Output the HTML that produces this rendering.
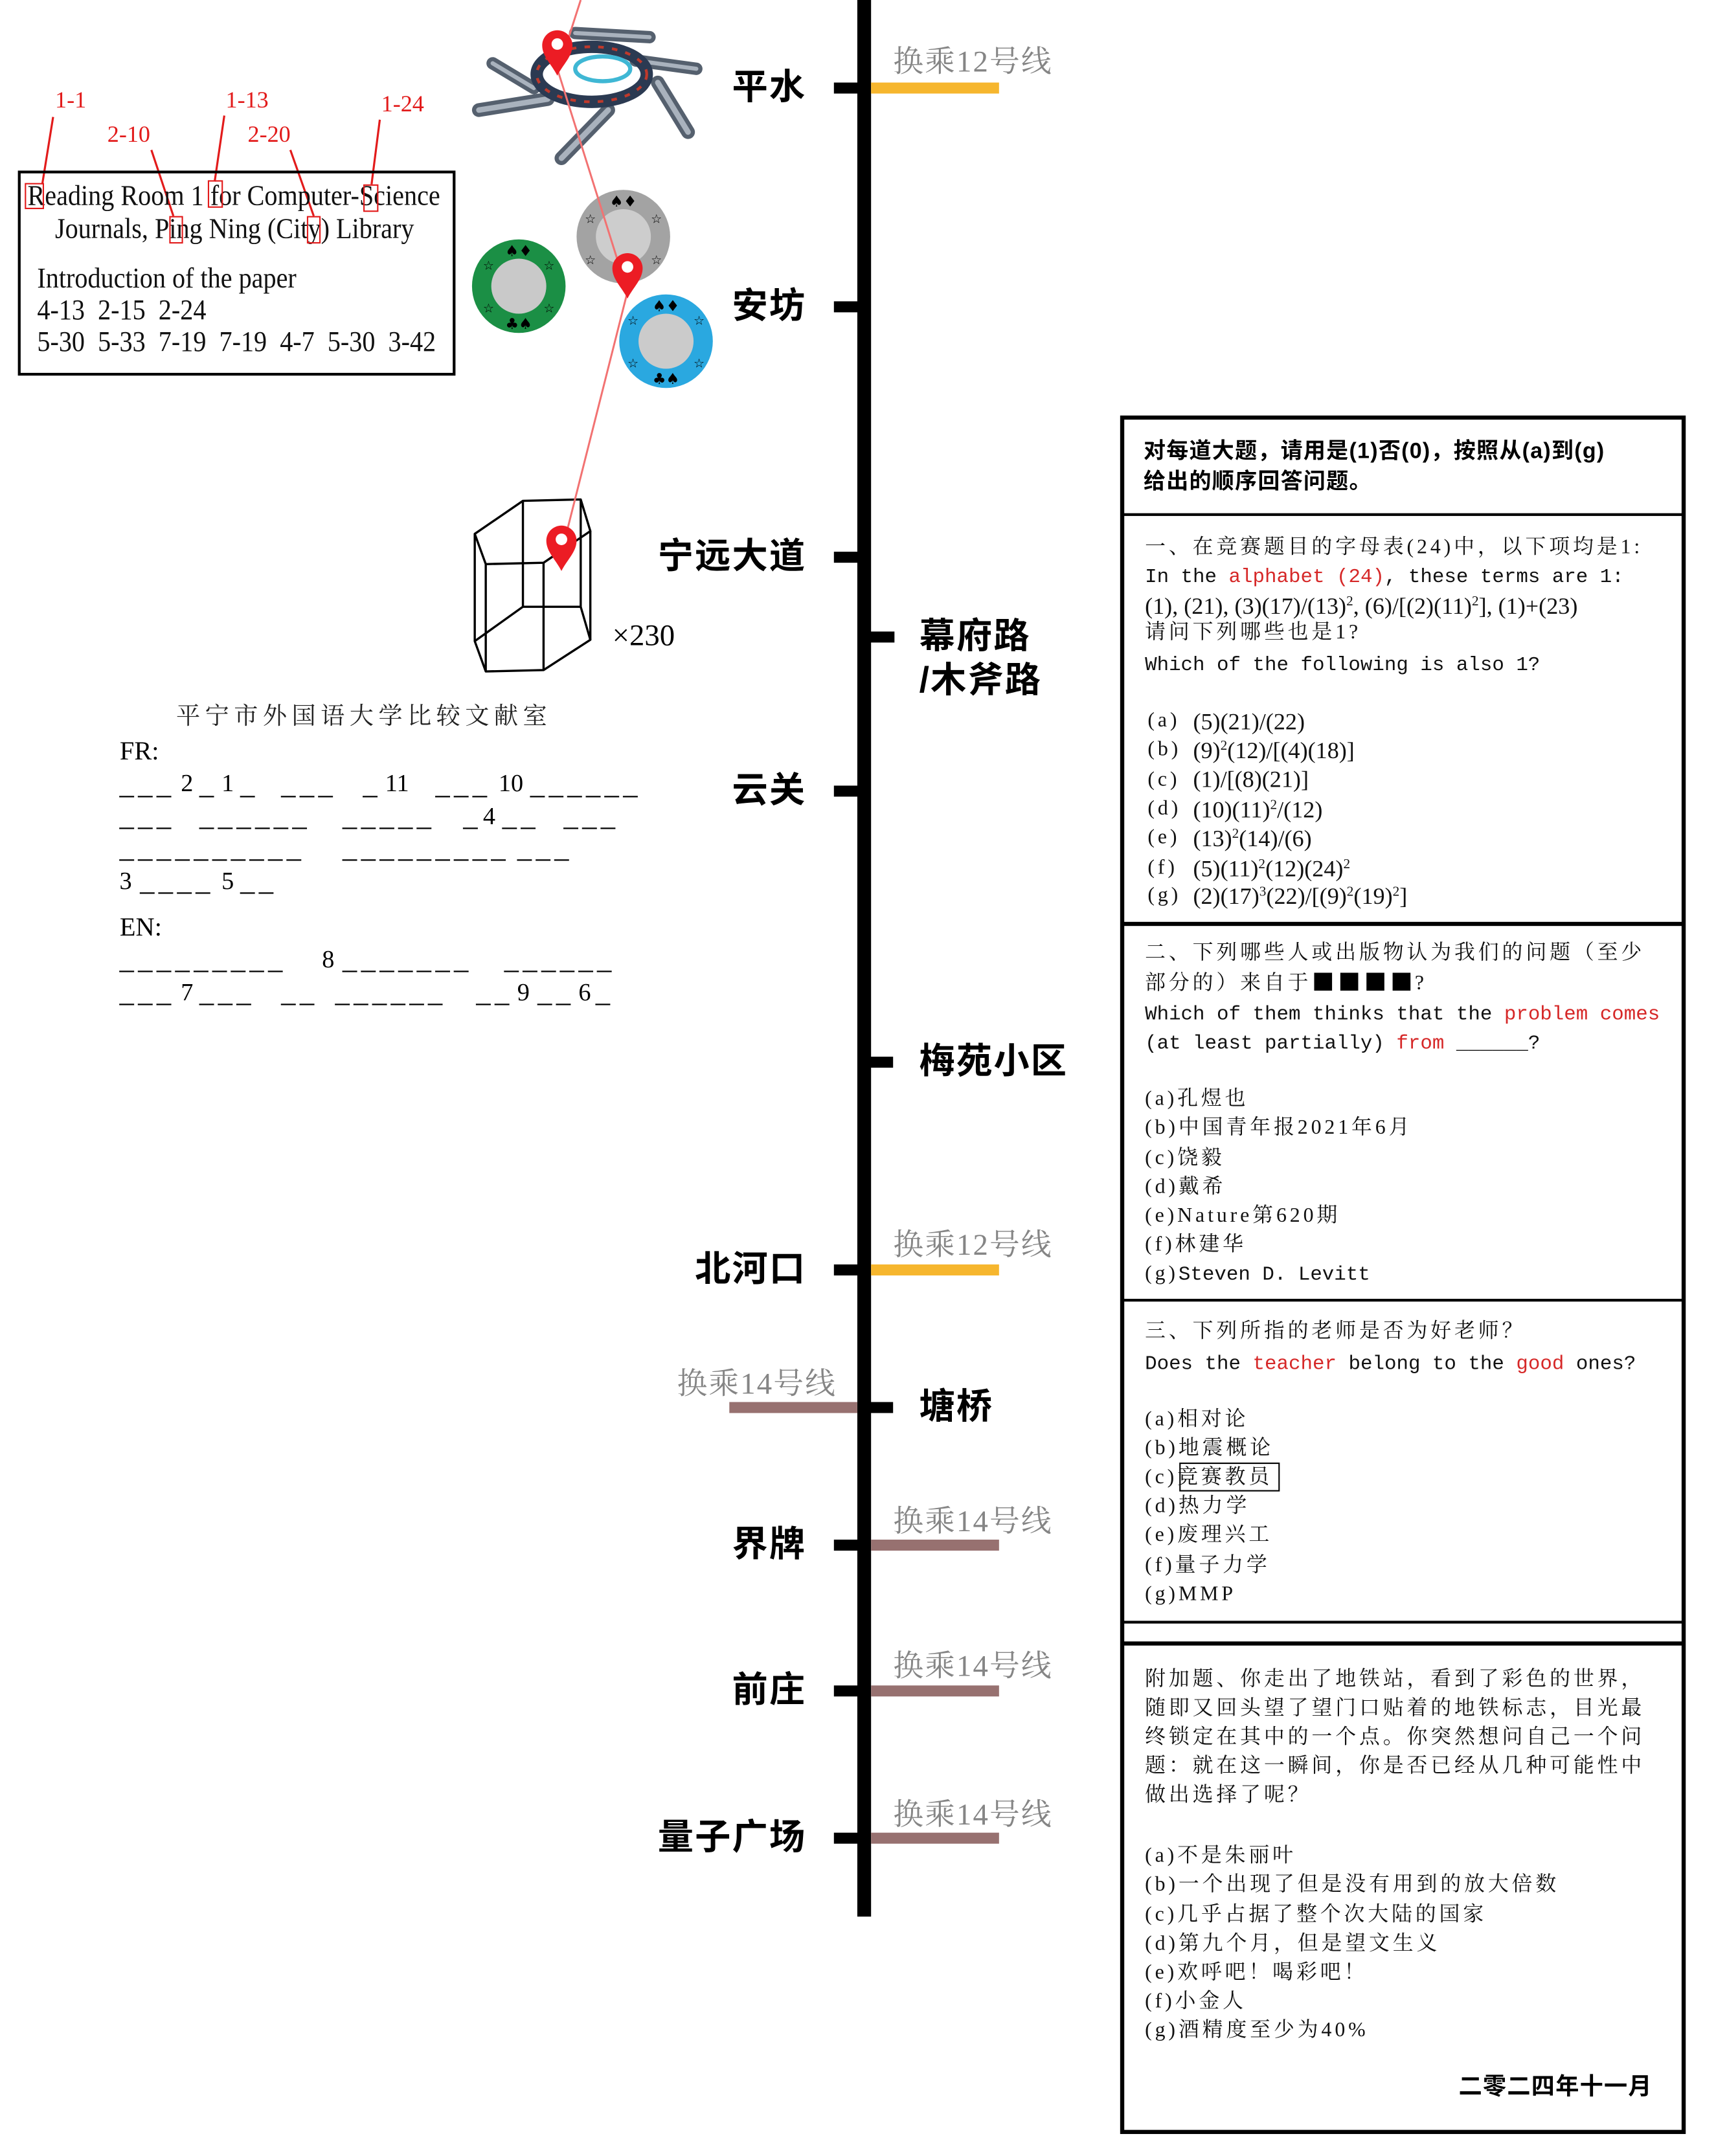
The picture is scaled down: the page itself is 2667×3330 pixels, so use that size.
<!DOCTYPE html>
<html><head><meta charset="utf-8">
<style>
html,body{margin:0;padding:0;background:#fff;}
body{width:2667px;height:3329px;overflow:hidden;position:relative;}
#c{position:absolute;left:0;top:0;width:1255px;height:1567px;transform:scale(2.1251);transform-origin:0 0;}
.a{position:absolute;white-space:pre;line-height:1;}
.st{font-family:"Liberation Sans","Noto Sans CJK SC",sans-serif;font-weight:700;font-size:26px;letter-spacing:1px;color:#000;}
.ic{font-family:"Liberation Serif","Noto Serif CJK SC",serif;font-size:22px;color:#858585;letter-spacing:1px;}
.bar{position:absolute;height:8px;}
.lb{font-family:"Liberation Serif",serif;font-size:21px;transform:scaleX(0.9);transform-origin:0 0;color:#111;}
.rd{font-family:"Liberation Serif",serif;font-size:17px;color:#e21b1b;}
.rb{position:absolute;border:1.6px solid #e21b1b;box-sizing:border-box;}
.u{font-family:"Liberation Serif",serif;font-size:21px;letter-spacing:3px;}
.d{font-family:"Liberation Serif",serif;font-size:18px;}
.zh{font-family:"Liberation Serif","Noto Serif CJK SC",serif;font-size:15px;letter-spacing:2.3px;color:#111;margin-top:3px;}
.mo{font-family:"Liberation Mono",monospace;font-size:14.5px;color:#111;margin-top:3px;}
.zh .mo{margin-top:0;letter-spacing:0;}
.fm{font-family:"Liberation Serif",serif;font-size:17px;color:#111;margin-top:2px;}
.fm sup{font-size:10px;vertical-align:6px;line-height:0;}
.r{color:#d62828;}
.div{position:absolute;left:815px;width:409px;height:2.6px;background:#000;}
</style></head><body><div id="c">

<div style="position:absolute;left:623px;top:0;width:10px;height:1393px;background:#000"></div>
<div class="bar" style="left:606px;width:18px;top:60px;background:#000"></div>
<div class="bar" style="left:606px;width:18px;top:219px;background:#000"></div>
<div class="bar" style="left:606px;width:18px;top:401px;background:#000"></div>
<div class="bar" style="left:606px;width:18px;top:571px;background:#000"></div>
<div class="bar" style="left:606px;width:18px;top:919px;background:#000"></div>
<div class="bar" style="left:606px;width:18px;top:1119px;background:#000"></div>
<div class="bar" style="left:606px;width:18px;top:1225px;background:#000"></div>
<div class="bar" style="left:606px;width:18px;top:1332px;background:#000"></div>
<div class="bar" style="left:632px;width:18px;top:459px;background:#000"></div>
<div class="bar" style="left:632px;width:17px;top:768px;background:#000"></div>
<div class="bar" style="left:632px;width:17px;top:1019px;background:#000"></div>
<div class="bar" style="left:633px;width:93px;top:60px;background:#f6b62e"></div>
<div class="bar" style="left:633px;width:93px;top:919px;background:#f6b62e"></div>
<div class="bar" style="left:530px;width:93px;top:1019px;background:#977170"></div>
<div class="bar" style="left:633px;width:93px;top:1119px;background:#977170"></div>
<div class="bar" style="left:633px;width:93px;top:1225px;background:#977170"></div>
<div class="bar" style="left:633px;width:93px;top:1332px;background:#977170"></div>
<div class="a ic" style="left:649px;top:34px">换乘12号线</div>
<div class="a ic" style="left:649px;top:894px">换乘12号线</div>
<div class="a ic" style="left:492px;top:995px">换乘14号线</div>
<div class="a ic" style="left:649px;top:1095px">换乘14号线</div>
<div class="a ic" style="left:649px;top:1200px">换乘14号线</div>
<div class="a ic" style="left:649px;top:1308px">换乘14号线</div>
<div class="a st" style="right:669px;top:50px">平水</div>
<div class="a st" style="right:669px;top:209px">安坊</div>
<div class="a st" style="right:669px;top:391px">宁远大道</div>
<div class="a st" style="right:669px;top:561px">云关</div>
<div class="a st" style="right:669px;top:909px">北河口</div>
<div class="a st" style="right:669px;top:1109px">界牌</div>
<div class="a st" style="right:669px;top:1215px">前庄</div>
<div class="a st" style="right:669px;top:1322px">量子广场</div>
<div class="a st" style="left:668px;top:449px">幕府路</div>
<div class="a st" style="left:668px;top:481px">/木斧路</div>
<div class="a st" style="left:668px;top:758px">梅苑小区</div>
<div class="a st" style="left:668px;top:1009px">塘桥</div>

<svg style="position:absolute;left:0;top:0" width="640" height="520" viewBox="0 0 640 520">
 <g stroke-linecap="round">
  <line x1="348" y1="80" x2="398" y2="72" stroke="#55606e" stroke-width="10"/>
  <line x1="358" y1="46" x2="388" y2="64" stroke="#55606e" stroke-width="9"/>
  <line x1="418" y1="24" x2="472" y2="27" stroke="#55606e" stroke-width="9"/>
  <line x1="462" y1="44" x2="506" y2="50" stroke="#55606e" stroke-width="9"/>
  <line x1="478" y1="60" x2="500" y2="96" stroke="#55606e" stroke-width="10"/>
  <line x1="442" y1="80" x2="408" y2="115" stroke="#55606e" stroke-width="10"/>
  <line x1="348" y1="80" x2="398" y2="72" stroke="#a9b2bd" stroke-width="4"/>
  <line x1="358" y1="46" x2="388" y2="64" stroke="#a9b2bd" stroke-width="3"/>
  <line x1="418" y1="24" x2="472" y2="27" stroke="#a9b2bd" stroke-width="3"/>
  <line x1="462" y1="44" x2="506" y2="50" stroke="#a9b2bd" stroke-width="3"/>
  <line x1="478" y1="60" x2="500" y2="96" stroke="#a9b2bd" stroke-width="4"/>
  <line x1="442" y1="80" x2="408" y2="115" stroke="#a9b2bd" stroke-width="4"/>
 </g>
 <ellipse cx="430" cy="54" rx="40" ry="20" fill="none" stroke="#2b3a52" stroke-width="9"/>
 <ellipse cx="430" cy="54" rx="40" ry="20" fill="none" stroke="#c0392b" stroke-width="2" stroke-dasharray="4 6"/>
 <ellipse cx="438" cy="50" rx="20" ry="9" fill="none" stroke="#3fb7d4" stroke-width="3"/>
 <g transform="translate(377,208)">
  <circle r="34" fill="#1b8f45"/><circle r="20" fill="#c9c9c9"/>
  <text y="-22" font-size="11" text-anchor="middle" font-family="DejaVu Sans">♠♦</text>
  <text y="31" font-size="11" text-anchor="middle" font-family="DejaVu Sans">♣♠</text>
  <g font-size="9" text-anchor="middle" font-family="DejaVu Sans"><text x="-22" y="-12">☆</text><text x="22" y="-12">☆</text><text x="-22" y="19">☆</text><text x="22" y="19">☆</text></g>
 </g>
 <g transform="translate(453,172)">
  <circle r="34" fill="#a3a3a3"/><circle r="20" fill="#cdcdcd"/>
  <text y="-22" font-size="11" text-anchor="middle" font-family="DejaVu Sans">♠♦</text>
  <g font-size="9" text-anchor="middle" font-family="DejaVu Sans"><text x="-24" y="-10">☆</text><text x="24" y="-10">☆</text><text x="-24" y="20">☆</text><text x="24" y="20">☆</text></g>
 </g>
 <g transform="translate(484,248)">
  <circle r="34" fill="#2aa8e0"/><circle r="20" fill="#cbcbcb"/>
  <text y="-22" font-size="11" text-anchor="middle" font-family="DejaVu Sans">♠♦</text>
  <text y="31" font-size="11" text-anchor="middle" font-family="DejaVu Sans">♣♠</text>
  <g font-size="9" text-anchor="middle" font-family="DejaVu Sans"><text x="-24" y="-12">☆</text><text x="24" y="-12">☆</text><text x="-24" y="19">☆</text><text x="24" y="19">☆</text></g>
 </g>
 <g fill="none" stroke="#000" stroke-width="1.6" stroke-linejoin="round">
  <polygon points="345,388 380,364 422,363 429,386 395,409 353,410"/>
  <polygon points="345,466 380,441 422,441 429,465 395,487 353,488"/>
  <line x1="345" y1="388" x2="345" y2="466"/><line x1="380" y1="364" x2="380" y2="441"/>
  <line x1="422" y1="363" x2="422" y2="441"/><line x1="429" y1="386" x2="429" y2="465"/>
  <line x1="395" y1="409" x2="395" y2="487"/><line x1="353" y1="410" x2="353" y2="488"/>
 </g>
 <polyline points="422,0 413,28" fill="none" stroke="#f27272" stroke-width="1.4"/>
 <polyline points="405,50 456,212 410,394" fill="none" stroke="#f27272" stroke-width="1.4"/>
 <g transform="translate(405,33)"><path d="M0,22 C-4,14 -11,8 -11,0 A11,11 0 1 1 11,0 C11,8 4,14 0,22 Z" fill="#ec1c24"/><circle r="4.2" cy="-1" fill="#fff"/></g>
 <g transform="translate(456,195)"><path d="M0,22 C-4,14 -11,8 -11,0 A11,11 0 1 1 11,0 C11,8 4,14 0,22 Z" fill="#ec1c24"/><circle r="4.2" cy="-1" fill="#fff"/></g>
 <g transform="translate(408,393)"><path d="M0,22 C-4,14 -11,8 -11,0 A11,11 0 1 1 11,0 C11,8 4,14 0,22 Z" fill="#ec1c24"/><circle r="4.2" cy="-1" fill="#fff"/></g>
 <g stroke="#e21b1b" stroke-width="1.5">
  <line x1="38.6" y1="85" x2="30.7" y2="134"/>
  <line x1="163" y1="84" x2="156" y2="132"/>
  <line x1="276" y1="87" x2="270" y2="134"/>
  <line x1="110" y1="109" x2="126" y2="157"/>
  <line x1="211" y1="109" x2="228" y2="157"/>
 </g>
</svg>
<div class="a" style="left:445px;top:451px;font-family:'Liberation Serif',serif;font-size:22px;">×230</div>

<div style="position:absolute;left:12.6px;top:124px;width:318px;height:149px;border:2px solid #000;box-sizing:border-box"></div>
<div class="a lb" style="left:20px;top:131.7px">Reading Room 1 for Computer-Science</div>
<div class="a lb" style="left:40px;top:155.8px">Journals, Ping Ning (City) Library</div>
<div class="a lb" style="left:27px;top:192px">Introduction of the paper</div>
<div class="a lb" style="left:27px;top:215.2px">4-13  2-15  2-24</div>
<div class="a lb" style="left:27px;top:238.4px">5-30  5-33  7-19  7-19  4-7  5-30  3-42</div>
<div class="rb" style="left:18px;top:133px;width:14px;height:19px"></div>
<div class="rb" style="left:150.5px;top:131px;width:11px;height:20px"></div>
<div class="rb" style="left:263.5px;top:134px;width:11px;height:20px"></div>
<div class="rb" style="left:123px;top:157px;width:9.5px;height:20px"></div>
<div class="rb" style="left:223px;top:157px;width:10px;height:20px"></div>
<div class="a rd" style="left:40px;top:64px">1-1</div>
<div class="a rd" style="left:164px;top:64px">1-13</div>
<div class="a rd" style="left:277px;top:66.6px">1-24</div>
<div class="a rd" style="left:78px;top:89.4px">2-10</div>
<div class="a rd" style="left:180px;top:89.4px">2-20</div>

<div class="a" style="left:128px;top:512px;font-family:'Liberation Serif','Noto Serif CJK SC',serif;font-size:17.5px;letter-spacing:3.5px;color:#222">平宁市外国语大学比较文献室</div>
<div class="a" style="left:87px;top:537px;font-family:'Liberation Serif',serif;font-size:19px">FR:</div>
<div class="a" style="left:87px;top:665px;font-family:'Liberation Serif',serif;font-size:19px">EN:</div>

<div class="a u" style="left:86.8px;top:560.4px">___</div>
<div class="a d" style="left:131.4px;top:560px">2</div>
<div class="a u" style="left:144.9px;top:560.4px">_</div>
<div class="a d" style="left:161px;top:560px">1</div>
<div class="a u" style="left:174.6px;top:560.4px">_</div>
<div class="a u" style="left:204.3px;top:560.4px">___</div>
<div class="a u" style="left:263.7px;top:560.4px">_</div>
<div class="a d" style="left:279.9px;top:560px">11</div>
<div class="a u" style="left:316.4px;top:560.4px">___</div>
<div class="a d" style="left:362.3px;top:560px">10</div>
<div class="a u" style="left:385.3px;top:560.4px">______</div>
<div class="a u" style="left:86.8px;top:583.4px">___</div>
<div class="a u" style="left:144.9px;top:583.4px">______</div>
<div class="a u" style="left:248.9px;top:583.4px">_____</div>
<div class="a u" style="left:336.6px;top:583.4px">_</div>
<div class="a d" style="left:351px;top:583.6px">4</div>
<div class="a u" style="left:365px;top:583.4px">__</div>
<div class="a u" style="left:409.6px;top:583.4px">___</div>
<div class="a u" style="left:86.8px;top:606px">__________</div>
<div class="a u" style="left:248.9px;top:606px">_________</div>
<div class="a u" style="left:375.9px;top:606px">___</div>
<div class="a d" style="left:86.8px;top:630.6px">3</div>
<div class="a u" style="left:101.7px;top:630.2px">____</div>
<div class="a d" style="left:161px;top:630.6px">5</div>
<div class="a u" style="left:174.6px;top:630.2px">__</div>
<div class="a u" style="left:86.8px;top:687px">_________</div>
<div class="a d" style="left:234px;top:687.6px">8</div>
<div class="a u" style="left:248.9px;top:687px">_______</div>
<div class="a u" style="left:366.4px;top:687px">______</div>
<div class="a u" style="left:86.8px;top:710.6px">___</div>
<div class="a d" style="left:131.4px;top:711.6px">7</div>
<div class="a u" style="left:144.9px;top:710.6px">___</div>
<div class="a u" style="left:204.3px;top:710.6px">__</div>
<div class="a u" style="left:243.5px;top:710.6px">______</div>
<div class="a u" style="left:346px;top:710.6px">__</div>
<div class="a d" style="left:375.9px;top:711.6px">9</div>
<div class="a u" style="left:390.6px;top:710.6px">__</div>
<div class="a d" style="left:420.4px;top:711.6px">6</div>
<div class="a u" style="left:432.8px;top:710.6px">_</div>

<div style="position:absolute;left:814px;top:301.5px;width:410.5px;height:1249px;border:3.4px solid #000;box-sizing:border-box"></div>
<div class="div" style="top:372.7px"></div>
<div class="div" style="top:670.2px"></div>
<div class="div" style="top:943.9px"></div>
<div class="div" style="top:1177.5px"></div>
<div class="div" style="top:1193.2px"></div>

<div class="a" style="left:831px;top:321px;font-family:'Liberation Sans','Noto Sans CJK SC',sans-serif;font-weight:700;font-size:16px;letter-spacing:0.6px">对每道大题，请用是(1)否(0)，按照从(a)到(g)</div>
<div class="a" style="left:831px;top:342.6px;font-family:'Liberation Sans','Noto Sans CJK SC',sans-serif;font-weight:700;font-size:16px;letter-spacing:0.6px">给出的顺序回答问题。</div>

<div class="a zh" style="left:832px;top:387.5px">一、在竞赛题目的字母表(24)中，以下项均是1:</div>
<div class="a mo" style="left:832px;top:410px">In the <span class="r">alphabet (24)</span>, these terms are 1:</div>
<div class="a fm" style="left:832px;top:429.5px">(1), (21), (3)(17)/(13)<sup>2</sup>, (6)/[(2)(11)<sup>2</sup>], (1)+(23)</div>
<div class="a zh" style="left:832px;top:450.2px">请问下列哪些也是1?</div>
<div class="a mo" style="left:832px;top:473.5px">Which of the following is also 1?</div>
<div class="a zh" style="left:834px;top:513.7px">(a)</div><div class="a fm" style="left:867px;top:513.5px">(5)(21)/(22)</div>
<div class="a zh" style="left:834px;top:535.1px">(b)</div><div class="a fm" style="left:867px;top:534.9px">(9)<sup>2</sup>(12)/[(4)(18)]</div>
<div class="a zh" style="left:834px;top:556.5px">(c)</div><div class="a fm" style="left:867px;top:556.3px">(1)/[(8)(21)]</div>
<div class="a zh" style="left:834px;top:577.9px">(d)</div><div class="a fm" style="left:867px;top:577.7px">(10)(11)<sup>2</sup>/(12)</div>
<div class="a zh" style="left:834px;top:599.3px">(e)</div><div class="a fm" style="left:867px;top:599.1px">(13)<sup>2</sup>(14)/(6)</div>
<div class="a zh" style="left:834px;top:620.7px">(f)</div><div class="a fm" style="left:867px;top:620.5px">(5)(11)<sup>2</sup>(12)(24)<sup>2</sup></div>
<div class="a zh" style="left:834px;top:641.1px">(g)</div><div class="a fm" style="left:867px;top:640.9px">(2)(17)<sup>3</sup>(22)/[(9)<sup>2</sup>(19)<sup>2</sup>]</div>

<div class="a zh" style="left:832px;top:682.9px">二、下列哪些人或出版物认为我们的问题（至少</div>
<div class="a zh" style="left:832px;top:704.3px">部分的）来自于<span style="display:inline-block;width:13px;height:13px;background:#000;margin:0 3px 0 2px;vertical-align:-1px"></span><span style="display:inline-block;width:13px;height:13px;background:#000;margin:0 3px;vertical-align:-1px"></span><span style="display:inline-block;width:13px;height:13px;background:#000;margin:0 3px;vertical-align:-1px"></span><span style="display:inline-block;width:13px;height:13px;background:#000;margin:0 3px;vertical-align:-1px"></span>?</div>
<div class="a mo" style="left:832px;top:727.5px">Which of them thinks that the <span class="r">problem comes</span></div>
<div class="a mo" style="left:832px;top:749px">(at least partially) <span class="r">from</span> ______?</div>
<div class="a zh" style="left:832px;top:788.5px">(a)孔煜也</div>
<div class="a zh" style="left:832px;top:810.3px">(b)中国青年报2021年6月</div>
<div class="a zh" style="left:832px;top:831.5px">(c)饶毅</div>
<div class="a zh" style="left:832px;top:852.7px">(d)戴希</div>
<div class="a zh" style="left:832px;top:873.9px">(e)Nature第620期</div>
<div class="a zh" style="left:832px;top:895.1px">(f)林建华</div>
<div class="a zh" style="left:832px;top:916.4px">(g)<span class="mo">Steven D. Levitt</span></div>

<div class="a zh" style="left:832px;top:957.7px">三、下列所指的老师是否为好老师？</div>
<div class="a mo" style="left:832px;top:981.5px">Does the <span class="r">teacher</span> belong to the <span class="r">good</span> ones?</div>
<div class="a zh" style="left:832px;top:1021.5px">(a)相对论</div>
<div class="a zh" style="left:832px;top:1042.7px">(b)地震概论</div>
<div class="a zh" style="left:832px;top:1063.9px">(c)竞赛教员</div>
<div style="position:absolute;left:857.4px;top:1062.6px;width:72.6px;height:21.7px;border:1.2px solid #000;box-sizing:border-box"></div>
<div class="a zh" style="left:832px;top:1085.1px">(d)热力学</div>
<div class="a zh" style="left:832px;top:1106.3px">(e)废理兴工</div>
<div class="a zh" style="left:832px;top:1127.5px">(f)量子力学</div>
<div class="a zh" style="left:832px;top:1148.5px">(g)MMP</div>

<div class="a zh" style="left:832px;top:1211.2px">附加题、你走出了地铁站，看到了彩色的世界，</div>
<div class="a zh" style="left:832px;top:1232.2px">随即又回头望了望门口贴着的地铁标志，目光最</div>
<div class="a zh" style="left:832px;top:1253.2px">终锁定在其中的一个点。你突然想问自己一个问</div>
<div class="a zh" style="left:832px;top:1274.2px">题：就在这一瞬间，你是否已经从几种可能性中</div>
<div class="a zh" style="left:832px;top:1295.2px">做出选择了呢？</div>
<div class="a zh" style="left:832px;top:1339.2px">(a)不是朱丽叶</div>
<div class="a zh" style="left:832px;top:1360.4px">(b)一个出现了但是没有用到的放大倍数</div>
<div class="a zh" style="left:832px;top:1381.6px">(c)几乎占据了整个次大陆的国家</div>
<div class="a zh" style="left:832px;top:1402.7px">(d)第九个月，但是望文生义</div>
<div class="a zh" style="left:832px;top:1423.9px">(e)欢呼吧！喝彩吧！</div>
<div class="a zh" style="left:832px;top:1445.1px">(f)小金人</div>
<div class="a zh" style="left:832px;top:1466.3px">(g)酒精度至少为40%</div>
<div class="a" style="left:1060px;top:1508px;font-family:'Liberation Sans','Noto Sans CJK SC',sans-serif;font-weight:700;font-size:17px;letter-spacing:0.6px">二零二四年十一月</div>

</div></body></html>
